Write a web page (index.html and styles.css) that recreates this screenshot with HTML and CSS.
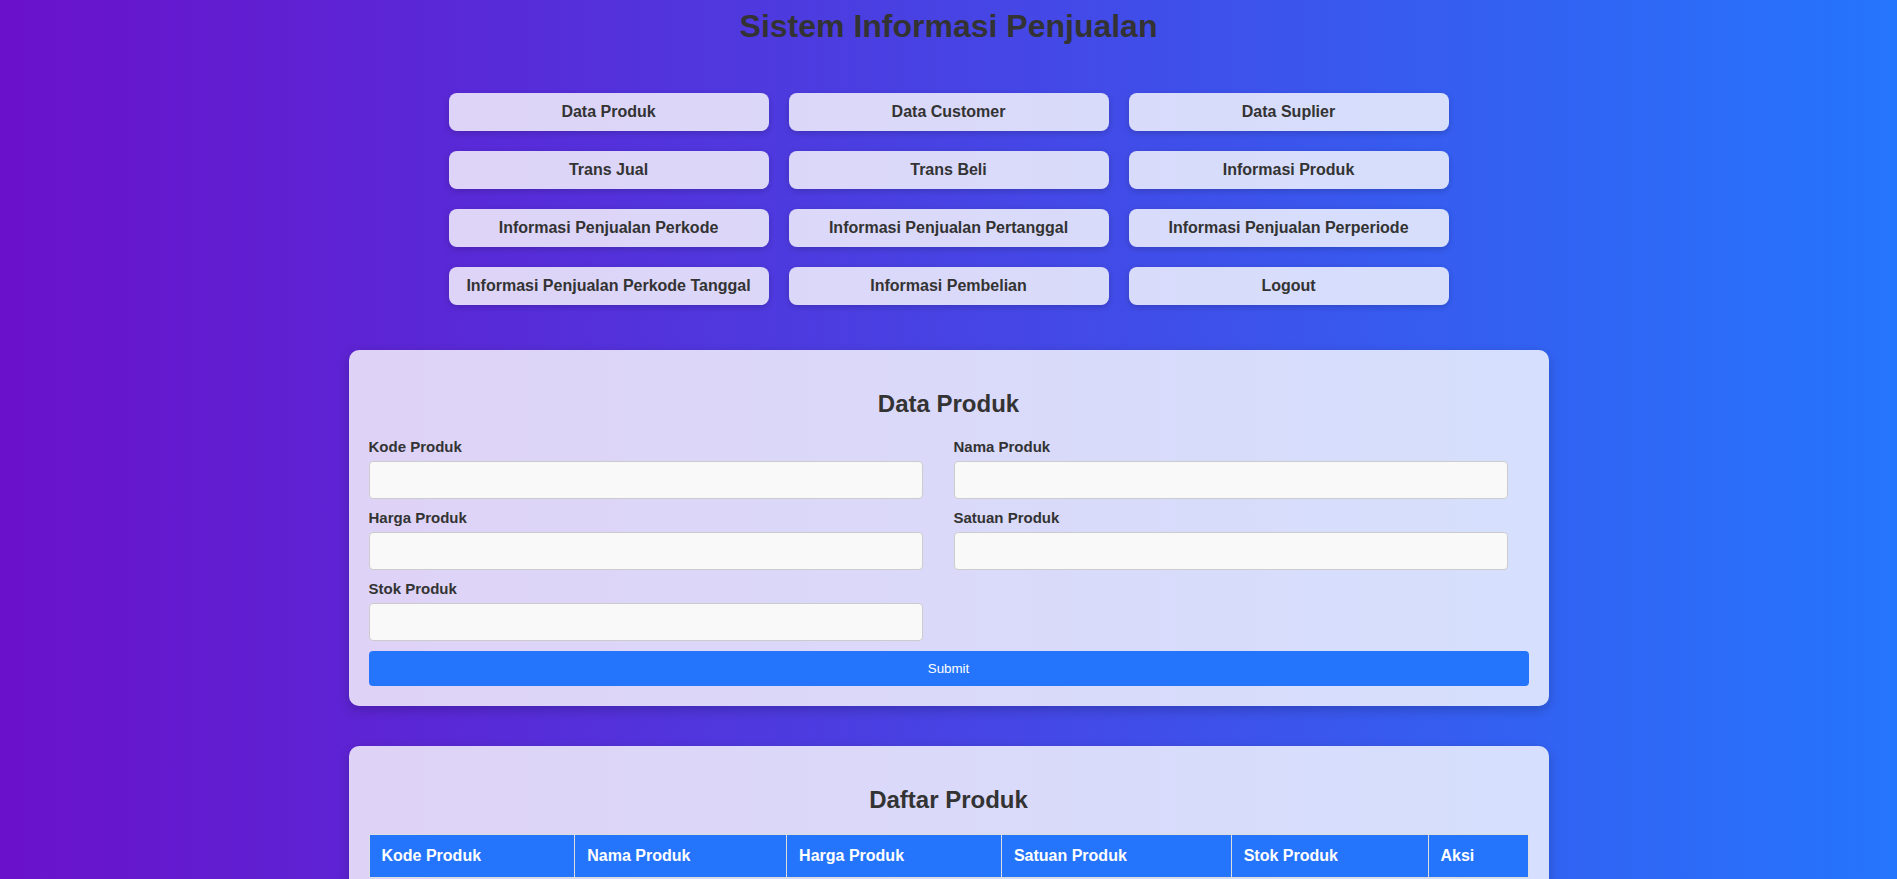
FILE: index.html
```html
<!DOCTYPE html>
<html lang="id">
<head>
<meta charset="utf-8">
<title>Sistem Informasi Penjualan</title>
<link rel="stylesheet" href="styles.css">
</head>
<body>
  <h1 class="title">Sistem Informasi Penjualan</h1>
  <nav class="menu">
    <a class="menu-btn" href="#">Data Produk</a>
    <a class="menu-btn" href="#">Data Customer</a>
    <a class="menu-btn" href="#">Data Suplier</a>
    <a class="menu-btn" href="#">Trans Jual</a>
    <a class="menu-btn" href="#">Trans Beli</a>
    <a class="menu-btn" href="#">Informasi Produk</a>
    <a class="menu-btn" href="#">Informasi Penjualan Perkode</a>
    <a class="menu-btn" href="#">Informasi Penjualan Pertanggal</a>
    <a class="menu-btn" href="#">Informasi Penjualan Perperiode</a>
    <a class="menu-btn" href="#">Informasi Penjualan Perkode Tanggal</a>
    <a class="menu-btn" href="#">Informasi Pembelian</a>
    <a class="menu-btn" href="#">Logout</a>
  </nav>

  <section class="card">
    <h2 class="card-title">Data Produk</h2>
    <form class="form">
      <div class="form-grid">
        <div class="form-group">
          <label class="form-label" for="kode">Kode Produk</label>
          <input class="form-input" id="kode" type="text">
        </div>
        <div class="form-group">
          <label class="form-label" for="nama">Nama Produk</label>
          <input class="form-input" id="nama" type="text">
        </div>
        <div class="form-group">
          <label class="form-label" for="harga">Harga Produk</label>
          <input class="form-input" id="harga" type="text">
        </div>
        <div class="form-group">
          <label class="form-label" for="satuan">Satuan Produk</label>
          <input class="form-input" id="satuan" type="text">
        </div>
        <div class="form-group">
          <label class="form-label" for="stok">Stok Produk</label>
          <input class="form-input" id="stok" type="text">
        </div>
      </div>
      <button class="submit-btn" type="submit">Submit</button>
    </form>
  </section>

  <section class="card card-list">
    <h2 class="card-title">Daftar Produk</h2>
    <table class="table">
      <thead>
        <tr>
          <th class="col-kode">Kode Produk</th>
          <th class="col-nama">Nama Produk</th>
          <th class="col-harga">Harga Produk</th>
          <th class="col-satuan">Satuan Produk</th>
          <th class="col-stok">Stok Produk</th>
          <th class="col-aksi">Aksi</th>
        </tr>
      </thead>
      <tbody></tbody>
    </table>
  </section>
</body>
</html>
```

FILE: styles.css
```css
* {
  box-sizing: border-box;
}

html {
  background: linear-gradient(to right, #6a11cb, #2575fc);
  min-height: 100%;
}

body {
  margin: 0;
  padding: 8px 0 60px;
  font-family: "Liberation Sans", Arial, sans-serif;
  color: #333;
  background: linear-gradient(to right, #6a11cb, #2575fc);
  min-height: 100vh;
}

.title {
  margin: 0;
  font-size: 32px;
  line-height: 37px;
  font-weight: bold;
  text-align: center;
  color: #333;
}

.menu {
  margin-top: 48px;
  display: grid;
  grid-template-columns: repeat(3, 320px);
  gap: 20px;
  justify-content: center;
}

.menu-btn {
  height: 38px;
  display: flex;
  align-items: center;
  justify-content: center;
  background: rgba(255, 255, 255, 0.8);
  border-radius: 8px;
  box-shadow: 0 2px 6px rgba(0, 0, 0, 0.18);
  color: #333;
  font-size: 16px;
  font-weight: bold;
  text-decoration: none;
}

.card {
  width: 1200px;
  margin: 45px auto 0;
  padding: 20px;
  background: rgba(255, 255, 255, 0.8);
  border-radius: 10px;
  box-shadow: 0 4px 12px rgba(0, 0, 0, 0.2);
}

.card-list {
  margin-top: 40px;
}

.card-title {
  margin: 20px 0;
  font-size: 24px;
  font-weight: bold;
  text-align: center;
  color: #333;
}

.form-grid {
  display: grid;
  grid-template-columns: 554px 554px;
  column-gap: 31px;
  row-gap: 10px;
}

.form-label {
  display: block;
  margin-bottom: 6px;
  font-size: 15px;
  font-weight: bold;
  color: #333;
}

.form-input {
  display: block;
  width: 100%;
  height: 38px;
  padding: 8px;
  border: 1px solid #ccc;
  border-radius: 4px;
  background: #f9f9f9;
  font-family: inherit;
  font-size: 14px;
}

.submit-btn {
  display: block;
  width: 100%;
  height: 35px;
  margin-top: 10px;
  border: none;
  border-radius: 4px;
  background: #2575fc;
  color: #fff;
  font-family: "Liberation Sans", Arial, sans-serif;
  font-size: 13.33px;
}

.table {
  width: 100%;
  border-collapse: collapse;
}

.table th {
  background: #2575fc;
  color: #fff;
  text-align: left;
  padding: 12px;
  border: 1px solid #ddd;
  font-size: 16px;
  font-weight: bold;
}

.col-kode { width: 206px; }
.col-nama { width: 212px; }
.col-harga { width: 215px; }
.col-satuan { width: 230px; }
.col-stok { width: 197px; }
.col-aksi { width: 100px; }
```
